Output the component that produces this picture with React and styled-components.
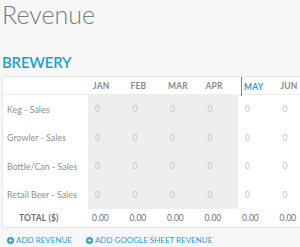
import React from "react";
import styled, { createGlobalStyle } from "styled-components";

const GlobalStyle = createGlobalStyle`
  html, body {
    margin: 0;
    padding: 0;
    background: #f7f7f7;
    overflow: hidden;
  }
  body {
    font-family: Lato, "Open Sans", sans-serif;
  }
`;

const months = ["JAN", "FEB", "MAR", "APR", "MAY", "JUN"];
const rows = ["Keg - Sales", "Growler - Sales", "Bottle/Can - Sales", "Retail Beer - Sales"];
const current = 4;

const App = () => {
  return (
    <>
      <GlobalStyle />
      <Page>
        <Title>Revenue</Title>
        <Section>BREWERY</Section>
        <Card>
          <HeadRow>
            <Cell />
            {months.map((m, i) => (
              <HeadCell key={m} $current={i === current}>
                {m}
              </HeadCell>
            ))}
          </HeadRow>
          {rows.map((r) => (
            <BodyRow key={r}>
              <Label>{r}</Label>
              {months.map((m, i) => (
                <Value key={m} $past={i < current}>
                  0
                </Value>
              ))}
            </BodyRow>
          ))}
          <TotalRow>
            <TotalLabel>TOTAL ($)</TotalLabel>
            {months.map((m) => (
              <Total key={m}>0.00</Total>
            ))}
          </TotalRow>
        </Card>
        <Actions>
          <AddButton>
            <PlusIcon />
            ADD REVENUE
          </AddButton>
          <AddButton>
            <PlusIcon />
            ADD GOOGLE SHEET REVENUE
          </AddButton>
        </Actions>
      </Page>
    </>
  );
};

const PlusIcon = () => (
  <svg width="7" height="7" viewBox="0 0 8 8">
    <circle cx="4" cy="4" r="4" fill="#2aa1cb" />
    <path d="M4 2v4M2 4h4" stroke="#fff" strokeWidth="1.3" />
  </svg>
);

export default App;

const Page = styled.div`
  padding: 0 0 0 2px;
  width: 340px;
`;

const Title = styled.h1`
  margin: 0;
  font-size: 25px;
  line-height: 28px;
  font-weight: 300;
  color: #7a7a7a;
`;

const Section = styled.h2`
  margin: 24px 0 0;
  font-size: 15px;
  line-height: 20px;
  font-weight: 600;
  letter-spacing: -0.2px;
  color: #23a0c9;
`;

const Card = styled.div`
  margin-top: 4px;
  background: #fff;
  border: 1px solid #e8e8e8;
  border-right: none;
`;

const Row = styled.div`
  display: grid;
  grid-template-columns: 85px repeat(6, 37.5px);
`;

const HeadRow = styled(Row)`
  height: 17px;
  border-bottom: 1px solid #ececec;
`;

const BodyRow = styled(Row)`
  height: 28.5px;
`;

const TotalRow = styled(Row)`
  height: 18px;
`;

const Cell = styled.div`
  display: flex;
  align-items: center;
  font-size: 8.5px;
`;

const HeadCell = styled(Cell)`
  padding-left: ${(p) => (p.$current ? "2px" : "5px")};
  margin-left: ${(p) => (p.$current ? "3px" : "0")};
  border-left: ${(p) => (p.$current ? "1.5px solid #2aa1cb" : "none")};
  margin-bottom: ${(p) => (p.$current ? "-2px" : "0")};
  font-weight: 700;
  color: ${(p) => (p.$current ? "#2aa1cb" : "#8a8a8a")};
  letter-spacing: 0.2px;
`;

const Label = styled(Cell)`
  padding-left: 4px;
  font-size: 8.9px;
  color: #8f8f8f;
  white-space: nowrap;
`;

const Value = styled(Cell)`
  padding-left: 7px;
  color: #c4c4c4;
  background: ${(p) => (p.$past ? "#eeeeee" : "transparent")};
`;

const TotalLabel = styled(Cell)`
  padding-left: 16px;
  font-weight: 700;
  color: #6f6f6f;
  letter-spacing: 0.2px;
`;

const Total = styled(Cell)`
  padding-left: 4px;
  color: #6f6f6f;
`;

const Actions = styled.div`
  display: flex;
  gap: 14px;
  padding: 7px 0 0 5px;
`;

const AddButton = styled.button`
  display: flex;
  align-items: center;
  gap: 2px;
  padding: 0;
  border: none;
  background: none;
  font-family: Lato, sans-serif;
  font-size: 8px;
  line-height: 10px;
  font-weight: 400;
  color: #2aa1cb;
  cursor: pointer;
`;
